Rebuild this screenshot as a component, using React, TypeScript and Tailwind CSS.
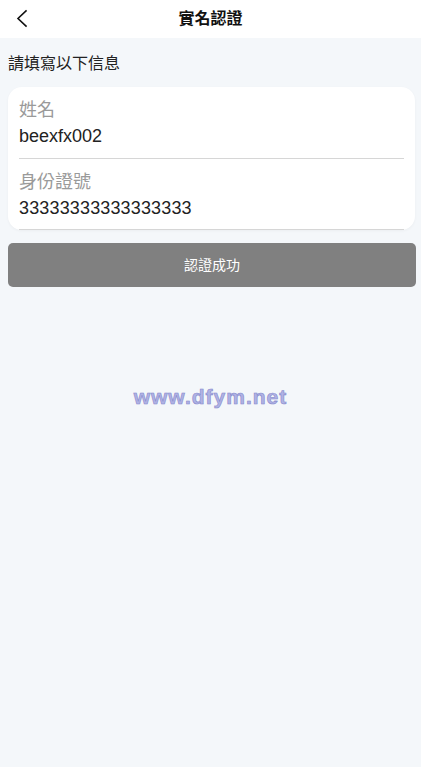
import React from "react";

export default function App() {
  const font = { fontFamily: '"Liberation Sans", Arial, "Noto Sans CJK TC", sans-serif' };
  return (
    <div className="min-h-[767px] w-full bg-[#f4f7fa] flex flex-col" style={font}>
      <div className="h-[38px] bg-white relative flex items-center justify-center shrink-0">
        <svg className="absolute left-[14px] top-[9px]" width="14" height="20" viewBox="0 0 14 20" fill="none">
          <polyline points="12,2 4,9.5 12,17" stroke="#111" strokeWidth="1.6" strokeLinecap="square" />
        </svg>
        <span className="text-[16px] font-bold text-[#111]">實名認證</span>
      </div>
      <div className="pt-[14px] pl-2 text-[16px] leading-[24px] text-[#222]">請填寫以下信息</div>
      <div className="mt-[11px] ml-2 mr-[6px] bg-white rounded-[14px] px-[11px] pt-[10px] shadow-[0_1px_3px_rgba(0,0,0,0.04)]">
        <div className="border-b border-[#d6d6d6] pb-[9px]">
          <div className="text-[18px] leading-[26px] text-[#9a9a9a]">姓名</div>
          <div className="text-[18px] leading-[26px] text-[#222]">beexfx002</div>
        </div>
        <div className="border-b border-[#d6d6d6] pt-[10px] pb-[8px]">
          <div className="text-[18px] leading-[26px] text-[#9a9a9a]">身份證號</div>
          <div className="text-[18px] leading-[26px] text-[#222] tracking-[0.15px]">33333333333333333</div>
        </div>
      </div>
      <div className="mt-[13px] ml-2 mr-[5px] h-[44px] rounded-[5px] bg-[#808080] flex items-center justify-center text-white text-[14px]">
        認證成功
      </div>
      <div className="mt-[94px] flex justify-center">
        <span className="text-[21px] font-bold tracking-[1px] text-[#b0b3e4] [-webkit-text-stroke:0.6px_#8588cc]">
          www.dfym.net
        </span>
      </div>
    </div>
  );
}
